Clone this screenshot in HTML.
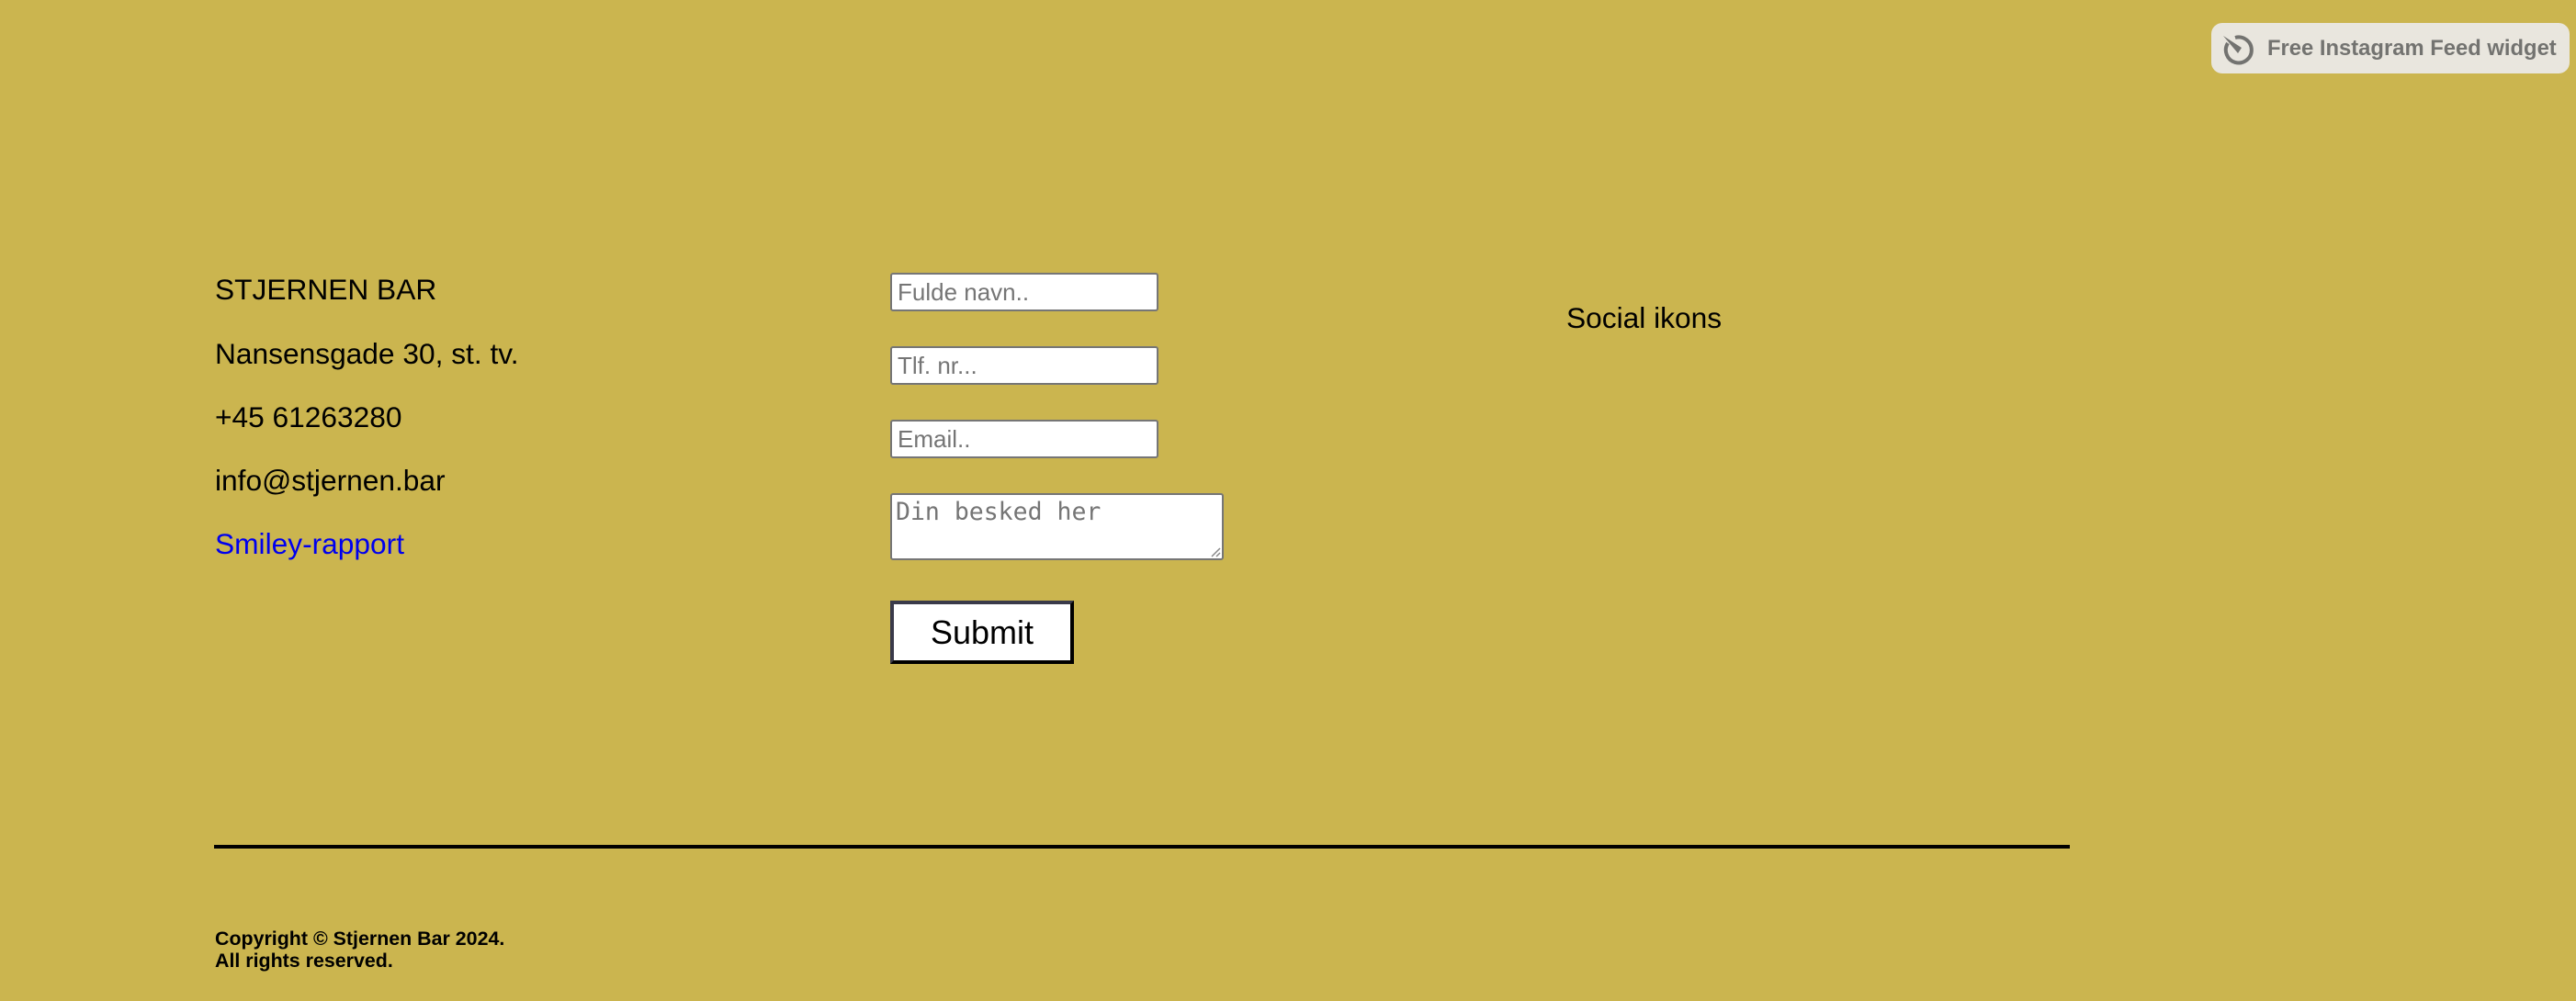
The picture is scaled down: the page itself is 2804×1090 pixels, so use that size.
<!DOCTYPE html>
<html><head><meta charset="utf-8">
<style>
html,body{margin:0;padding:0;}
body{width:2804px;height:1090px;background:#cbb54f;position:relative;overflow:hidden;font-family:"Liberation Sans",Arial,sans-serif;}
.t{position:absolute;left:234px;font-size:31.7px;line-height:36px;color:#000;white-space:nowrap;}
.in{position:absolute;left:969px;width:292px;height:42px;box-sizing:border-box;background:#fff;border:2px solid #767676;border-radius:3px;font-size:26px;color:#757575;padding-left:6px;line-height:38px;font-family:"Liberation Sans",Arial,sans-serif;}
</style></head><body>
<div class="t" style="top:297px">STJERNEN BAR</div>
<div class="t" style="top:367px">Nansensgade 30, st. tv.</div>
<div class="t" style="top:436px">+45 61263280</div>
<div class="t" style="top:505px">info@stjernen.bar</div>
<div class="t" style="top:574px;color:#0000ee">Smiley-rapport</div>

<div class="in" style="top:297px">Fulde navn..</div>
<div class="in" style="top:377px">Tlf. nr...</div>
<div class="in" style="top:457px">Email..</div>
<div class="in" style="top:537px;width:363px;height:73px;font-family:'DejaVu Sans Mono','Liberation Mono',monospace;font-size:26.5px;line-height:32px;padding-top:3px;padding-left:4px;">Din besked her
<svg style="position:absolute;right:1px;bottom:1px" width="12" height="12"><path d="M11 2L2 11M11 7L7 11" stroke="#888" stroke-width="1.5"/></svg></div>

<div style="position:absolute;left:969px;top:654px;width:200px;height:69px;box-sizing:border-box;background:#fff;border:4px solid;border-color:#3a3a4a #000 #000 #3a3a4a;font-size:36px;text-align:center;line-height:61px;color:#000;">Submit</div>

<div class="t" style="left:1705px;top:328px">Social ikons</div>

<div style="position:absolute;left:233px;top:920px;width:2020px;height:4px;background:#000"></div>

<div style="position:absolute;left:234px;top:1010px;font-size:21.4px;font-weight:bold;line-height:24px;color:#000">Copyright © Stjernen Bar 2024.<br>All rights reserved.</div>

<div style="position:absolute;left:2407px;top:25px;width:390px;height:55px;background:#e9e6de;border-radius:12px;">
<svg style="position:absolute;left:10px;top:10px" width="40" height="36" viewBox="0 0 40 36">
<path d="M16 6 A14 14 0 1 1 8 12" fill="none" stroke="#737370" stroke-width="4"/>
<path d="M3 4 L23 17 L19 23 Z" fill="#737370"/>
</svg>
<div style="position:absolute;left:61px;top:0;line-height:55px;font-size:23.8px;font-weight:bold;color:#737370;white-space:nowrap">Free Instagram Feed widget</div>
</div>
</body></html>
